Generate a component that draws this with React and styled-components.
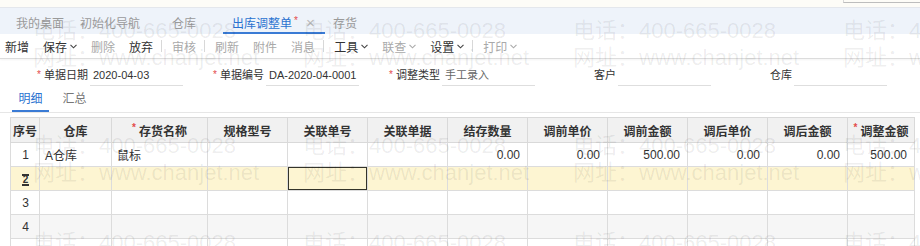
import styled, { createGlobalStyle } from "styled-components";

const GlobalStyle = createGlobalStyle`
  html, body {
    margin: 0;
    padding: 0;
    background: #fff;
    overflow: hidden;
  }
  body {
    font-family: "Liberation Sans", "Noto Sans CJK SC", sans-serif;
    font-size: 12px;
    color: #333;
  }
`;

const Page = styled.div`
  position: relative;
  width: 920px;
  height: 246px;
  overflow: hidden;
`;

const TopStrip = styled.div`
  height: 7px;
  background: #fdfcf7;
  border-bottom: 1px solid #e4e7ec;
  display: flex;
  justify-content: flex-end;
`;

const TopInput = styled.div`
  width: 76px;
  height: 2px;
  border-left: 1px solid #d8d8d8;
  border-bottom: 1px solid #bdbdbd;
`;

const TabBar = styled.div`
  height: 26px;
  background: #eef3fa;
  display: flex;
  padding-left: 8px;
`;

const Tab = styled.div`
  width: ${(p) => p.$w}px;
  margin-left: ${(p) => p.$ml || 0}px;
  box-sizing: border-box;
  display: flex;
  align-items: center;
  justify-content: ${(p) => (p.$active ? "flex-start" : "center")};
  padding: 4px 0 0 ${(p) => (p.$active ? 9 : 0)}px;
  color: ${(p) => (p.$active ? "#2a72d0" : "#9a9a9a")};
  border-bottom: 2px solid ${(p) => (p.$active ? "#3a7bd5" : "transparent")};
  white-space: nowrap;
`;

const Dot = styled.span`
  color: #e34b4b;
  font-size: 10px;
  margin-left: 2px;
  align-self: flex-start;
  margin-top: 3px;
`;

const Close = styled.span`
  color: #b9b9b9;
  font-size: 15px;
  margin-left: 8px;
`;

const Toolbar = styled.div`
  height: 24px;
  display: flex;
  align-items: center;
  padding-left: 5px;
  border-bottom: 1px solid #dcdcdc;
  box-shadow: 0 1px 2px rgba(0, 0, 0, 0.05);
`;

const Tool = styled.span`
  display: inline-flex;
  align-items: center;
  gap: 3px;
  margin-right: 14px;
  color: ${(p) => (p.$off ? "#a9a9a9" : "#333")};
  white-space: nowrap;
`;

const Sep = styled.span`
  width: 1px;
  height: 12px;
  background: #d8d8d8;
  margin: 0 10px 0 -6px;
`;

const Chevron = ({ off }) => (
  <svg width="7" height="5" viewBox="0 0 7 5">
    <path d="M0.5 0.8 L3.5 3.8 L6.5 0.8" fill="none" stroke={off ? "#aaa" : "#444"} strokeWidth="1.1" />
  </svg>
);

const FormRow = styled.div`
  height: 30px;
  box-sizing: border-box;
  padding: 6px 0 0 37px;
  display: flex;
`;

const Field = styled.div`
  width: 176px;
  display: flex;
  align-items: flex-start;
`;

const Label = styled.div`
  width: 51px;
  line-height: 20px;
  font-size: 11px;
  text-align: right;
  white-space: nowrap;
  color: #333;
`;

const Req = styled.span`
  color: #e34b4b;
  font-size: 10px;
  margin-right: 3px;
  vertical-align: top;
`;

const Value = styled.div`
  width: 90px;
  margin-left: 2px;
  height: 20px;
  line-height: 20px;
  padding-left: 3px;
  font-size: 11px;
  border-bottom: 1px solid #dedede;
  white-space: nowrap;
  color: ${(p) => (p.$muted ? "#666" : "#333")};
`;

const SubTabs = styled.div`
  height: 23px;
  display: flex;
  gap: 7px;
  padding-left: 12px;
  border-bottom: 1px solid #e6e6e6;
`;

const SubTab = styled.div`
  width: 37px;
  text-align: center;
  line-height: 21px;
  color: ${(p) => (p.$active ? "#2a72d0" : "#777")};
  border-bottom: 2px solid ${(p) => (p.$active ? "#3a7bd5" : "transparent")};
`;

const TableWrap = styled.div`
  padding: 4px 0 0 10px;
`;

const Grid = styled.table`
  border-collapse: collapse;
  table-layout: fixed;
  width: 904px;
`;

const Th = styled.th`
  height: 24px;
  padding: 0;
  background: #f1f1f1;
  border: 1px solid #d9d9d9;
  font-weight: bold;
  color: #333;
  text-align: center;
  white-space: nowrap;
`;

const Row = styled.tr`
  height: 24px;
  background: ${(p) => p.$bg || "#fff"};
`;

const Td = styled.td`
  padding: 0 ${(p) => (p.$num ? 7 : 4)}px 0 5px;
  border: 1px solid #dcdcdc;
  text-align: ${(p) => (p.$num ? "right" : p.$center ? "center" : "left")};
  white-space: nowrap;
  color: #333;
  box-shadow: ${(p) => (p.$selected ? "inset 0 0 0 1px #34342a" : "none")};
`;

const EditMark = styled.span`
  display: inline-block;
  font-weight: bold;
  font-size: 10px;
  line-height: 8px;
  padding: 0 1px;
  border-top: 2px solid #333;
  border-bottom: 2px solid #333;
`;

const Watermarks = styled.div`
  position: absolute;
  inset: 0;
  pointer-events: none;
`;

const Mark = styled.div`
  position: absolute;
  left: ${(p) => p.$x}px;
  top: ${(p) => p.$y}px;
  font-family: "Liberation Sans", "Noto Sans CJK SC", sans-serif;
  font-size: 22px;
  line-height: 27px;
  color: rgba(0, 0, 0, 0.075);
  white-space: nowrap;
`;

const columns = [
  { name: "序号", w: 29 },
  { name: "仓库", w: 72 },
  { name: "存货名称", w: 96, req: true },
  { name: "规格型号", w: 80 },
  { name: "关联单号", w: 80 },
  { name: "关联单据", w: 80 },
  { name: "结存数量", w: 80 },
  { name: "调前单价", w: 80 },
  { name: "调前金额", w: 80 },
  { name: "调后单价", w: 80 },
  { name: "调后金额", w: 80 },
  { name: "调整金额", w: 67, req: true },
];

const rows = [
  { no: "1", cells: ["A仓库", "鼠标", "", "", "", "0.00", "0.00", "500.00", "0.00", "0.00", "500.00"] },
  { no: "2", edit: true, bg: "#fdf5d2", cells: Array(11).fill("") },
  { no: "3", cells: Array(11).fill("") },
  { no: "4", bg: "#f6f6f6", cells: Array(11).fill("") },
  { no: "", cells: Array(11).fill("") },
];

const tools = [
  { t: "新增" },
  { t: "保存", menu: true },
  { t: "删除", off: true },
  { t: "放弃" },
  { sep: true },
  { t: "审核", off: true },
  { sep: true },
  { t: "刷新", off: true },
  { t: "附件", off: true },
  { t: "消息", off: true },
  { sep: true },
  { t: "工具", menu: true },
  { t: "联查", menu: true, off: true },
  { t: "设置", menu: true },
  { sep: true },
  { t: "打印", menu: true, off: true },
];

const fields = [
  { label: "单据日期", value: "2020-04-03", req: true },
  { label: "单据编号", value: "DA-2020-04-0001", req: true },
  { label: "调整类型", value: "手工录入", req: true, muted: true },
  { label: "客户", value: "" },
  { label: "仓库", value: "" },
];

export default function App() {
  return (
    <Page>
      <GlobalStyle />
      <TopStrip>
        <TopInput />
      </TopStrip>
      <TabBar>
        <Tab $w={64}>我的桌面</Tab>
        <Tab $w={76}>初始化导航</Tab>
        <Tab $w={72}>仓库</Tab>
        <Tab $w={102} $ml={3} $active>
          出库调整单<Dot>*</Dot>
          <Close>×</Close>
        </Tab>
        <Tab $w={40}>存货</Tab>
      </TabBar>
      <Toolbar>
        {tools.map((it, i) =>
          it.sep ? (
            <Sep key={i} />
          ) : (
            <Tool key={i} $off={it.off}>
              {it.t}
              {it.menu && <Chevron off={it.off} />}
            </Tool>
          )
        )}
      </Toolbar>
      <FormRow>
        {fields.map((f) => (
          <Field key={f.label}>
            <Label>
              {f.req && <Req>*</Req>}
              {f.label}
            </Label>
            <Value $muted={f.muted}>{f.value}</Value>
          </Field>
        ))}
      </FormRow>
      <SubTabs>
        <SubTab $active>明细</SubTab>
        <SubTab>汇总</SubTab>
      </SubTabs>
      <TableWrap>
        <Grid>
          <colgroup>
            {columns.map((c) => (
              <col key={c.name} style={{ width: c.w }} />
            ))}
          </colgroup>
          <thead>
            <tr>
              {columns.map((c) => (
                <Th key={c.name}>
                  {c.req && <Req>*</Req>}
                  {c.name}
                </Th>
              ))}
            </tr>
          </thead>
          <tbody>
            {rows.map((r, ri) => (
              <Row key={ri} $bg={r.bg}>
                <Td $center>{r.edit ? <EditMark>2</EditMark> : r.no}</Td>
                {r.cells.map((v, ci) => (
                  <Td key={ci} $num={ci >= 5} $selected={r.edit && ci === 3}>
                    {v}
                  </Td>
                ))}
              </Row>
            ))}
          </tbody>
        </Grid>
      </TableWrap>
      <Watermarks>
        {[17, 132, 229].map((y) =>
          [33, 303, 573, 843].map((x) => (
            <Mark key={`${x}-${y}`} $x={x} $y={y}>
              电话：400-665-0028
              <br />
              网址：www.chanjet.net
            </Mark>
          ))
        )}
      </Watermarks>
    </Page>
  );
}
